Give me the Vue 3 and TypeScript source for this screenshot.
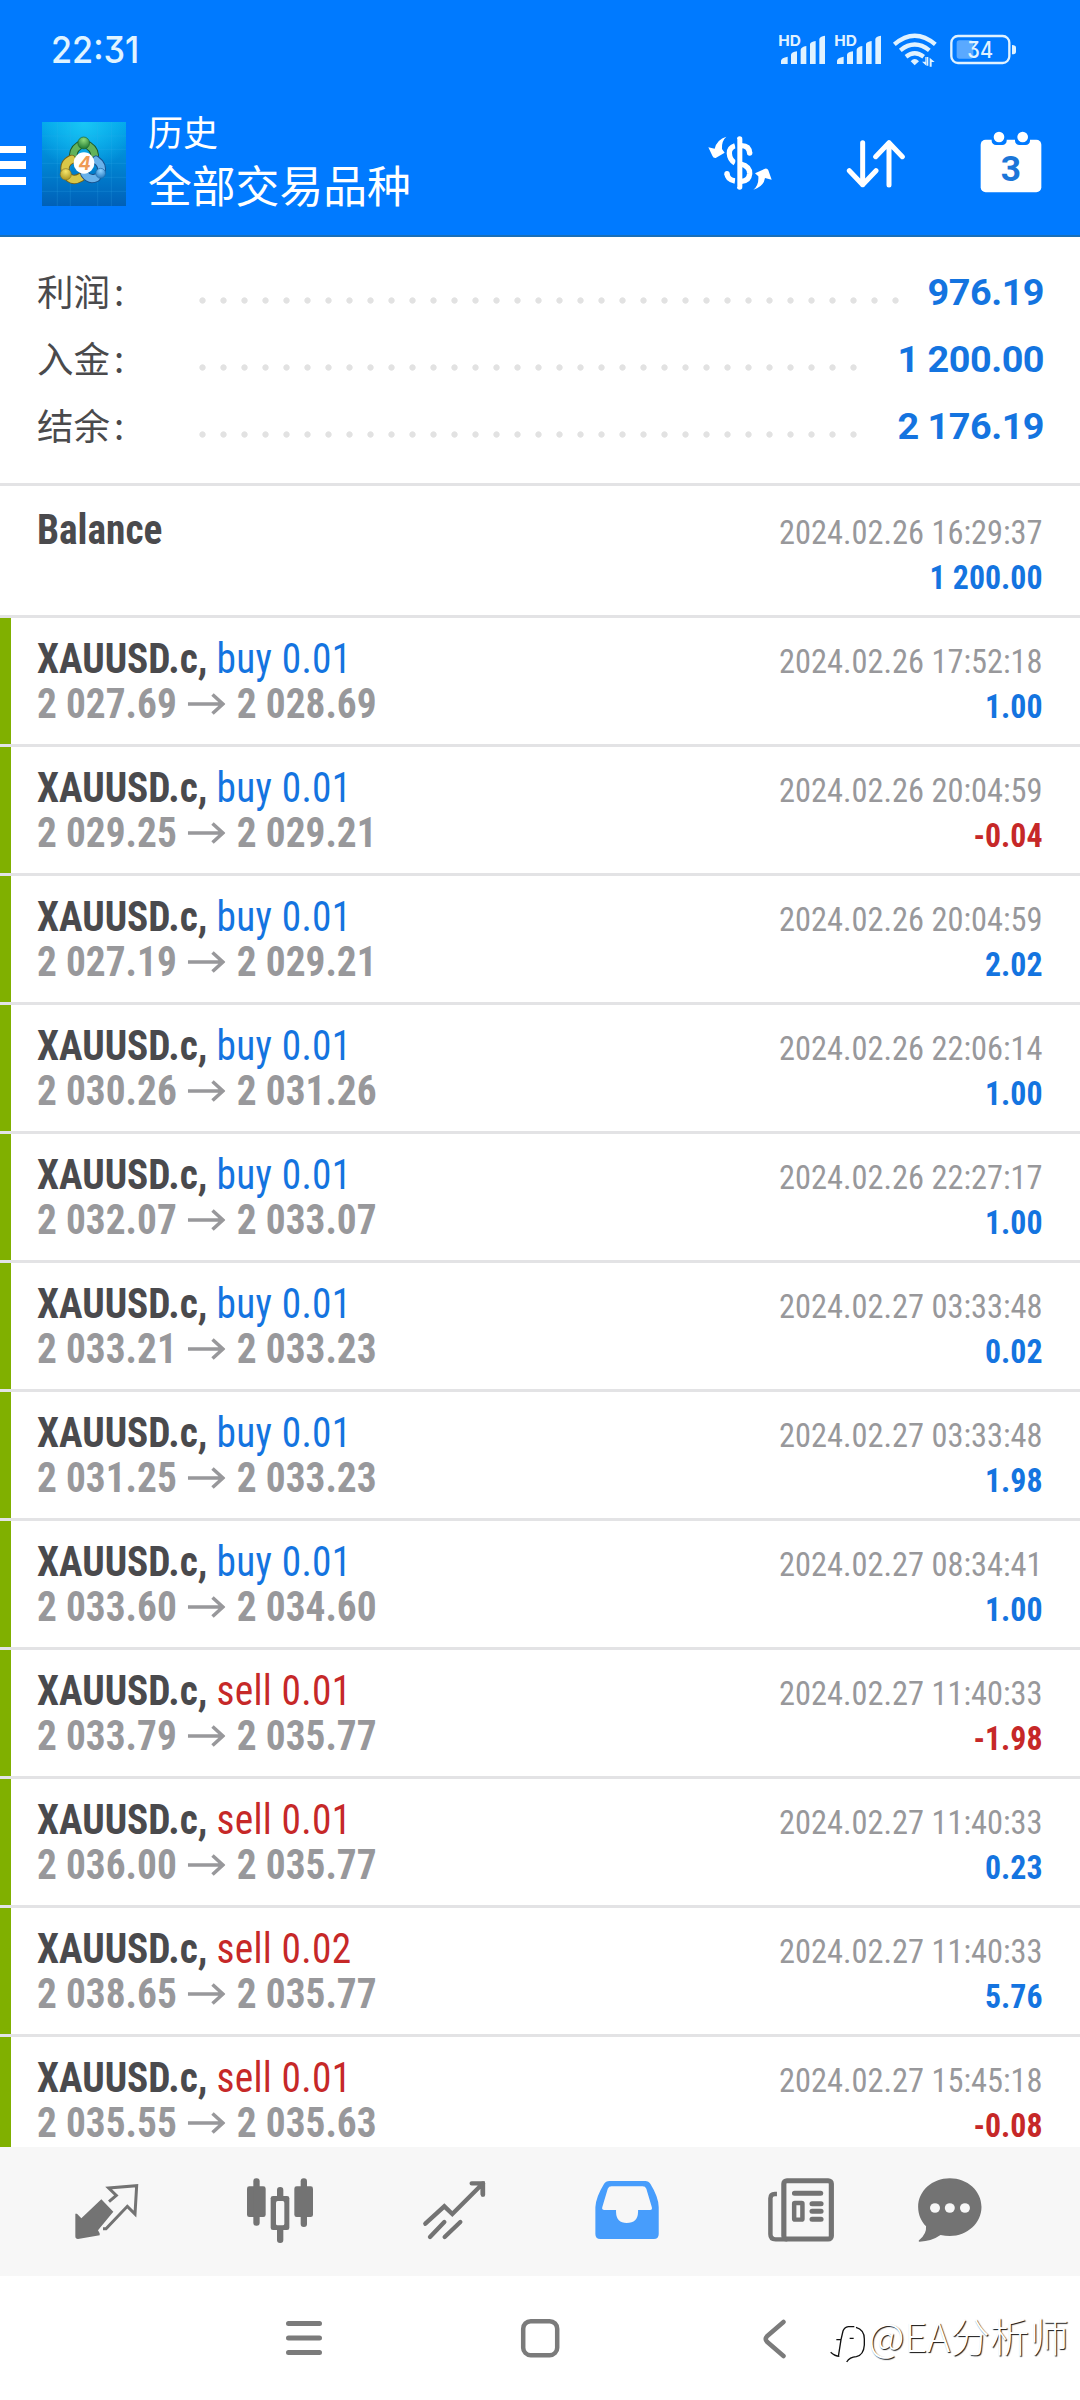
<script setup lang="ts">
interface Deal {
  side: 'buy' | 'sell'
  volume: string
  open: string
  close: string
  time: string
  profit: string
}

const summary = [
  { label: '利润', value: '976.19', dots: 34 },
  { label: '入金', value: '1 200.00', dots: 32 },
  { label: '结余', value: '2 176.19', dots: 32 },
]

const deal = (side: Deal['side'], volume: string, open: string, close: string, time: string, profit: string): Deal =>
  ({ side, volume, open, close, time, profit })

const deals: Deal[] = [
  deal('buy', '0.01', '2 027.69', '2 028.69', '2024.02.26 17:52:18', '1.00'),
  deal('buy', '0.01', '2 029.25', '2 029.21', '2024.02.26 20:04:59', '-0.04'),
  deal('buy', '0.01', '2 027.19', '2 029.21', '2024.02.26 20:04:59', '2.02'),
  deal('buy', '0.01', '2 030.26', '2 031.26', '2024.02.26 22:06:14', '1.00'),
  deal('buy', '0.01', '2 032.07', '2 033.07', '2024.02.26 22:27:17', '1.00'),
  deal('buy', '0.01', '2 033.21', '2 033.23', '2024.02.27 03:33:48', '0.02'),
  deal('buy', '0.01', '2 031.25', '2 033.23', '2024.02.27 03:33:48', '1.98'),
  deal('buy', '0.01', '2 033.60', '2 034.60', '2024.02.27 08:34:41', '1.00'),
  deal('sell', '0.01', '2 033.79', '2 035.77', '2024.02.27 11:40:33', '-1.98'),
  deal('sell', '0.01', '2 036.00', '2 035.77', '2024.02.27 11:40:33', '0.23'),
  deal('sell', '0.02', '2 038.65', '2 035.77', '2024.02.27 11:40:33', '5.76'),
  deal('sell', '0.01', '2 035.55', '2 035.63', '2024.02.27 15:45:18', '-0.08'),
]
</script>

<template>
  <div class="screen">
    <header class="top">
      <div class="status">
        <span class="clock">22:31</span>
        <svg class="status-icons" width="240" height="40" viewBox="354 90 720 120" fill="#e0f2ff">
          <g v-for="dx in [0, 168]" :key="dx" :transform="`translate(${dx} 0)`">
            <text x="355" y="137" class="hd" textLength="68" lengthAdjust="spacingAndGlyphs">HD</text>
            <path d="M363 192v-10q1-9 20-12v22zM393 192v-28q1-7 18-10v38zM422 192v-43q1-8 17-11v54zM450 192v-59q1-8 17-10v69zM478 192v-75q1-8 17-10v85z" />
          </g>
          <g fill="none" stroke="#e0f2ff" stroke-width="13">
            <path d="M703 133Q764 81 826 133" />
            <path d="M721 151Q764 116 808 151" />
            <path d="M738 170Q764 150 791 170" />
          </g>
          <path d="M752 184Q764 170 777 184L764 196z" />
          <path d="M799 171v26l-13-12h10v-14zM809 200v-27l15 13h-9v14zM800 197h5v-26h-5z" />
          <rect x="890" y="121" width="50" height="55" rx="8" fill="#5aa9ff" />
          <rect x="874" y="108" width="174" height="81" rx="20" fill="none" stroke="#e0f2ff" stroke-width="7" />
          <path d="M1056 135q12 0 12 8v12q0 8-12 8z" />
          <text x="922" y="174" class="pct" textLength="77" lengthAdjust="spacingAndGlyphs">34</text>
        </svg>
      </div>
      <div class="bar">
        <div class="burger"><i></i><i></i><i></i></div>
        <svg class="logo" width="84" height="84" viewBox="33 36 258 252" preserveAspectRatio="none">
          <defs>
            <linearGradient id="sky" x1="0" y1="0" x2="0" y2="1">
              <stop offset="0" stop-color="#00a4ea" /><stop offset=".5" stop-color="#0085d2" /><stop offset="1" stop-color="#0060b8" />
            </linearGradient>
            <radialGradient id="glow" cx=".5" cy="0" r=".6">
              <stop offset="0" stop-color="#19c6f5" /><stop offset="1" stop-color="#19c6f5" stop-opacity="0" />
            </radialGradient>
            <radialGradient id="gg" cx=".5" cy=".25" r=".8"><stop offset="0" stop-color="#8edb7a" /><stop offset="1" stop-color="#15702c" /></radialGradient>
            <radialGradient id="gy" cx=".5" cy=".25" r=".8"><stop offset="0" stop-color="#f6e66b" /><stop offset="1" stop-color="#a8901a" /></radialGradient>
            <radialGradient id="gb" cx=".5" cy=".25" r=".8"><stop offset="0" stop-color="#8fd2ff" /><stop offset="1" stop-color="#1d74bd" /></radialGradient>
          </defs>
          <rect x="33" y="36" width="258" height="252" fill="url(#sky)" />
          <rect x="33" y="36" width="258" height="252" fill="url(#glow)" />
          <path d="M80 36v252M120 36v252M204 36v252M246 36v252M33 78h258M33 118h258M33 160h258M33 202h258M33 244h258" stroke="#39b4ee" stroke-opacity=".3" stroke-width="2" />
          <g stroke-linecap="round" fill="none">
            <path d="M130 148Q124 122 147 107M176 107Q200 122 194 150" stroke="#1d5a2c" stroke-width="26" />
            <path d="M130 148Q124 122 147 107M176 107Q200 122 194 150" stroke="#63b35a" stroke-width="20" />
            <path d="M124 148Q98 160 105 186M118 204Q132 214 152 202" stroke="#74621a" stroke-width="28" />
            <path d="M124 148Q98 160 105 186M118 204Q132 214 152 202" stroke="#d8c748" stroke-width="22" />
            <path d="M199 150Q222 166 214 188M200 203Q178 212 164 192" stroke="#17518d" stroke-width="27" />
            <path d="M199 150Q222 166 214 188M200 203Q178 212 164 192" stroke="#69b2ea" stroke-width="21" />
          </g>
          <circle cx="161" cy="99" r="18" fill="url(#gg)" stroke="#1c6530" stroke-width="2" />
          <circle cx="106" cy="193" r="17" fill="url(#gy)" stroke="#857325" stroke-width="2" />
          <circle cx="213" cy="190" r="15" fill="url(#gb)" stroke="#2269a5" stroke-width="2" />
          <circle cx="162" cy="159" r="32" fill="#fff" />
          <text x="145" y="179" class="four">4</text>
        </svg>
        <div class="titles">
          <div class="t1">历史</div>
          <div class="t2">全部交易品种</div>
        </div>
        <svg class="act dollar" width="64" height="56" viewBox="143 406 192 168" fill="#fff">
          <path d="M198 411Q183 424 185 448L193 459L166 475Q159 476 156 468L144 443L163 447Q170 419 198 411z" />
          <path d="M279 570Q296 557 294 530L284 521L314 507Q321 505 324 512L334 540L314 535Q310 561 279 570z" />
          <g fill="none" stroke="#fff" stroke-width="16">
            <path d="M238 418V562" stroke-linecap="round" />
            <path d="M268 461Q267 437 241 438M224 438Q206 444 207 461Q208 480 224 490M241 493Q269 500 268 522Q266 543 244 545M224 544Q201 540 200 522" />
          </g>
          <circle cx="268" cy="460" r="8" /><circle cx="200" cy="522" r="8" />
          <path d="M228 418V562" stroke="#007aff" stroke-width="6" />
        </svg>
        <svg class="act sort" width="60" height="50" viewBox="557 416 180 150" fill="none" stroke="#fff" stroke-width="15" stroke-linecap="round" stroke-linejoin="round">
          <path d="M607 427V553M567 511L607 553L647 511M686 554V427M646 469L686 427L726 469" />
        </svg>
        <svg class="act cal" width="62" height="62" viewBox="958 394 186 186" fill="#fff">
          <rect x="960" y="420" width="182" height="158" rx="15" />
          <g fill="#007aff"><rect x="993" y="402" width="45" height="34" rx="13" /><rect x="1063" y="402" width="45" height="34" rx="13" /></g>
          <circle cx="1015" cy="412" r="16" /><circle cx="1086" cy="412" r="16" />
          <text x="1051" y="545" class="day">3</text>
        </svg>
      </div>
    </header>

    <section class="summary">
      <div v-for="s in summary" :key="s.label" class="sum-row">
        <span class="sum-label">{{ s.label }}<b>:</b></span>
        <span class="dots" :style="{ width: s.dots * 21 + 'px' }"></span>
        <span class="sum-value">{{ s.value }}</span>
      </div>
    </section>

    <main class="list">
      <div class="row balance">
        <div class="left"><div class="l1"><b>Balance</b></div></div>
        <div class="right"><div class="time">2024.02.26 16:29:37</div><div class="profit">1 200.00</div></div>
      </div>
      <div v-for="(d, i) in deals" :key="i" class="row deal">
        <div class="left">
          <div class="l1"><b>XAUUSD.c,</b> <span :class="d.side">{{ d.side }} {{ d.volume }}</span></div>
          <div class="l2">
            <span>{{ d.open }}</span>
            <svg class="arrow" width="40" height="22" viewBox="0 0 38 22" preserveAspectRatio="none" fill="none" stroke="#98989b" stroke-width="3.6"><path d="M0 11H35M25 1.5L35.5 11L25 20.5" /></svg>
            <span>{{ d.close }}</span>
          </div>
        </div>
        <div class="right">
          <div class="time">{{ d.time }}</div>
          <div class="profit" :class="{ neg: d.profit.startsWith('-') }">{{ d.profit }}</div>
        </div>
      </div>
    </main>

    <nav class="tabs">
      <span class="tab">
        <svg width="66" height="66" viewBox="224 534 198 198" fill="none" stroke="#737373" stroke-width="9">
          <path d="M306 598L342 635L296 691L301 700V706L236 717Q228 717 228 709V641L233 641L246 655z" fill="#737373" stroke="none" />
          <path d="M329 605L351 586L328 564L412 557L407 642L384 619L320 686H311" />
        </svg>
      </span>
      <span class="tab">
        <svg width="66" height="66" viewBox="741 534 198 198" fill="#737373">
          <rect x="741" y="559" width="56" height="92" rx="7" /><rect x="760" y="535" width="19" height="142" rx="9" />
          <rect x="883" y="559" width="56" height="92" rx="7" /><rect x="902" y="535" width="19" height="146" rx="9" />
          <rect x="831" y="561" width="19" height="168" rx="9" /><rect x="812" y="588" width="56" height="102" rx="7" />
          <rect x="828" y="603" width="25" height="73" rx="5" fill="#f7f7f7" />
        </svg>
      </span>
      <span class="tab">
        <svg width="66" height="66" viewBox="1260 534 198 198" fill="none" stroke="#737373" stroke-width="13" stroke-linecap="round">
          <path d="M1273 671L1330 619L1354 642L1444 552M1412 550H1445V583M1287 711L1330 666M1331 711L1378 666" />
          <path d="M1446 550V584" />
        </svg>
      </span>
      <span class="tab">
        <svg width="66" height="66" viewBox="157 144 191.7 198" preserveAspectRatio="none">
          <path fill="#479dfc" fill-rule="evenodd" d="M202 153H306Q316 153 321 162Q345 202 345 232V312Q345 327 331 327H175Q161 327 161 312V232Q162 202 186 162Q191 153 202 153zM208 169Q200 169 197 176L181 232Q179 240 187 240H221V246Q222 279 252 279Q284 279 285 246V240H320Q327 240 325 232L309 176Q306 169 298 169z" />
        </svg>
      </span>
      <span class="tab">
        <svg width="66" height="66" viewBox="664 144 191.7 198" preserveAspectRatio="none" fill="none" stroke="#737373">
          <rect x="710" y="152" width="138" height="175" rx="9" stroke-width="15" />
          <path d="M690 192H684Q671 192 671 205V313Q671 328 686 328H720" stroke-width="13" />
          <path d="M741 190H817M792 221H818M792 244H818M792 268H818" stroke-width="15" stroke-linecap="round" />
          <rect x="740" y="219" width="24" height="50" rx="2" stroke-width="13" />
        </svg>
      </span>
      <span class="tab last">
        <svg width="66" height="66" viewBox="1097.7 144 191.7 198" preserveAspectRatio="none">
          <path fill="#737373" d="M1193 145C1244 145 1285 183 1285 231C1285 279 1244 318 1193 318Q1180 318 1166 315Q1140 334 1105 335Q1100 333 1105 329Q1126 312 1124 289C1110 274 1101 254 1101 231C1101 183 1142 145 1193 145z" />
          <g fill="#f7f7f7"><circle cx="1150" cy="234" r="14.500" /><circle cx="1193" cy="234" r="14.500" /><circle cx="1237" cy="234" r="14.500" /></g>
        </svg>
      </span>
    </nav>

    <footer class="sys">
      <svg class="s-menu" width="38" height="40" viewBox="0 0 38 40" stroke="#7b7b7b" stroke-width="5" stroke-linecap="round"><path d="M3.500 5.500H34.500M3.500 20H34.500M3.500 34.500H34.500" /></svg>
      <svg class="s-home" width="40" height="40" viewBox="0 0 40 40" fill="none" stroke="#7b7b7b" stroke-width="4.500"><rect x="3.200" y="3.200" width="34" height="34" rx="7.500" /></svg>
      <svg class="s-back" width="26" height="42" viewBox="0 0 26 42" fill="none" stroke="#7b7b7b" stroke-width="4.500" stroke-linecap="round" stroke-linejoin="round"><path d="M22.500 4L6 18.200Q3.500 21 6 23.800L22.500 38" /></svg>
      <div class="mark">
        <svg width="38" height="42" viewBox="30 105 114 126" fill="none">
          <path d="M35 190Q48 202 61 202M58 203L66 152M52 152H66L72 126Q76 115 88 113H106M92 148H104M111 115Q136 122 136 150V168Q134 198 112 203Q92 204 83 219" stroke="#111" stroke-width="4" />
        </svg>
        <span>@EA分析师</span>
      </div>
    </footer>
  </div>
</template>

<style>
body { background: #fff; }
</style>

<style scoped>
.screen {
  width: 1080px;
  height: 2400px;
  display: flex;
  flex-direction: column;
  overflow: hidden;
  background: #fff;
  font-family: "Roboto Condensed", Roboto, "Noto Sans CJK SC", sans-serif;
}
.top { height: 237px; box-sizing: border-box; background: #007aff; border-bottom: 2px solid #1a6fb8; flex: none; }
.status { height: 100px; display: flex; justify-content: space-between; padding: 0 2px 0 51px; box-sizing: border-box; }
.clock { font: 500 37px/100px Inter, sans-serif; font-feature-settings: "cv09"; color: #e0f4ff; transform: scaleX(.925); transform-origin: left; }
.status-icons { margin: 30px 60px 0 0; }
.hd { font: 700 44px Inter, sans-serif; }
.pct { font: 500 67px Inter, sans-serif; font-feature-settings: "cv09"; }
.bar { height: 135px; display: flex; align-items: flex-start; }
.burger { width: 26px; margin-top: 45.500px; display: flex; flex-direction: column; gap: 8.300px; }
.burger i { height: 7.500px; background: #fff; }
.logo { margin: 21.500px 1px 0 15.500px; flex: none; }
.four { font: italic 700 56px Inter, sans-serif; fill: #ee9a55; }
.titles { margin: 10px 0 0 21.500px; color: #fff; font-family: "Noto Sans CJK SC", sans-serif; width: 515.500px; }
.t1 { font-size: 35px; line-height: 42px; }
.t2 { font-size: 43.800px; line-height: 64px; }
.act { flex: none; }
.dollar { margin: 35.300px 0 0 44.200px; }
.sort { margin: 38.700px 0 0 74px; }
.cal { margin: 31.300px 0 0 74px; }
.day { font: 700 106px Roboto, sans-serif; fill: #1b76d8; text-anchor: middle; }

.summary { height: 246px; box-sizing: border-box; padding: 22px 36px 0 37px; flex: none; }
.sum-row { height: 67px; display: flex; align-items: center; }
.sum-label { width: 155.300px; flex: none; margin-top: -4px; font: 400 36.500px/67px "Noto Sans CJK SC", sans-serif; color: #4a4a4c; }
.sum-label b { font-weight: 400; margin-left: 4px; }
.dots { height: 7px; margin-top: 16px; background: radial-gradient(circle at 10.500px 3.500px, #e2e2e2 2.700px, transparent 3.600px) 0 0 / 21px 7px repeat-x; }
.sum-value { margin-left: auto; font: 700 37.800px/67px Roboto, sans-serif; letter-spacing: -.5px; color: #1474e0; }

.list { height: 1664px; flex: none; overflow: hidden; }
.row { height: 129px; box-sizing: border-box; border-top: 3px solid #e3e3e5; display: flex; justify-content: space-between; padding: 18px 37px 0 37px; }
.balance { height: 132px; padding-top: 21px; }
.deal { background: linear-gradient(#80b000, #80b000) 0 0 / 11px 100% no-repeat; background-clip: padding-box; }
.left { font-size: 42px; line-height: 45px; font-stretch: 75%; color: #4a4a4d; white-space: nowrap; transform: scaleX(.937); transform-origin: left; }
.l2 { display: flex; align-items: center; font-weight: 700; color: #98989b; }
.arrow { margin: 0 12px; }
.buy, .sell { letter-spacing: .35px; }
.buy { color: #1474e0; }
.sell { color: #c62828; }
.right { padding-top: 2.500px; font-size: 33.500px; line-height: 45px; text-align: right; font-stretch: 75%; white-space: nowrap; }
.time { color: #98989b; transform: scaleX(.967); transform-origin: right; }
.profit { font-weight: 700; color: #1474e0; transform: scaleX(.95); transform-origin: right; }
.profit.neg { color: #c62828; }

.tabs { height: 129px; box-sizing: border-box; flex: none; background: #f7f7f7; display: flex; align-items: center; padding: 0 0 2px 20.300px; }
.tab { width: 173.400px; display: flex; justify-content: center; }
.tab svg { overflow: visible; }
.last { width: 126px; }

.sys { flex: 1; display: flex; align-items: flex-start; padding-top: 42px; }
.s-menu { margin-left: 285px; }
.s-home { margin: 0 0 0 197px; }
.s-home, .s-menu, .s-back { flex: none; }
.s-back { margin: 0 0 0 200.500px; }
.mark { display: flex; margin-left: 42px; }
.mark svg { flex: none; margin-top: 6px; }
.mark span { font: 300 39.500px/42px "Noto Sans CJK SC", sans-serif; color: #fff; text-shadow: 1px 1px 1px #111; white-space: nowrap; margin: -4px 0 0 2px; }
</style>
